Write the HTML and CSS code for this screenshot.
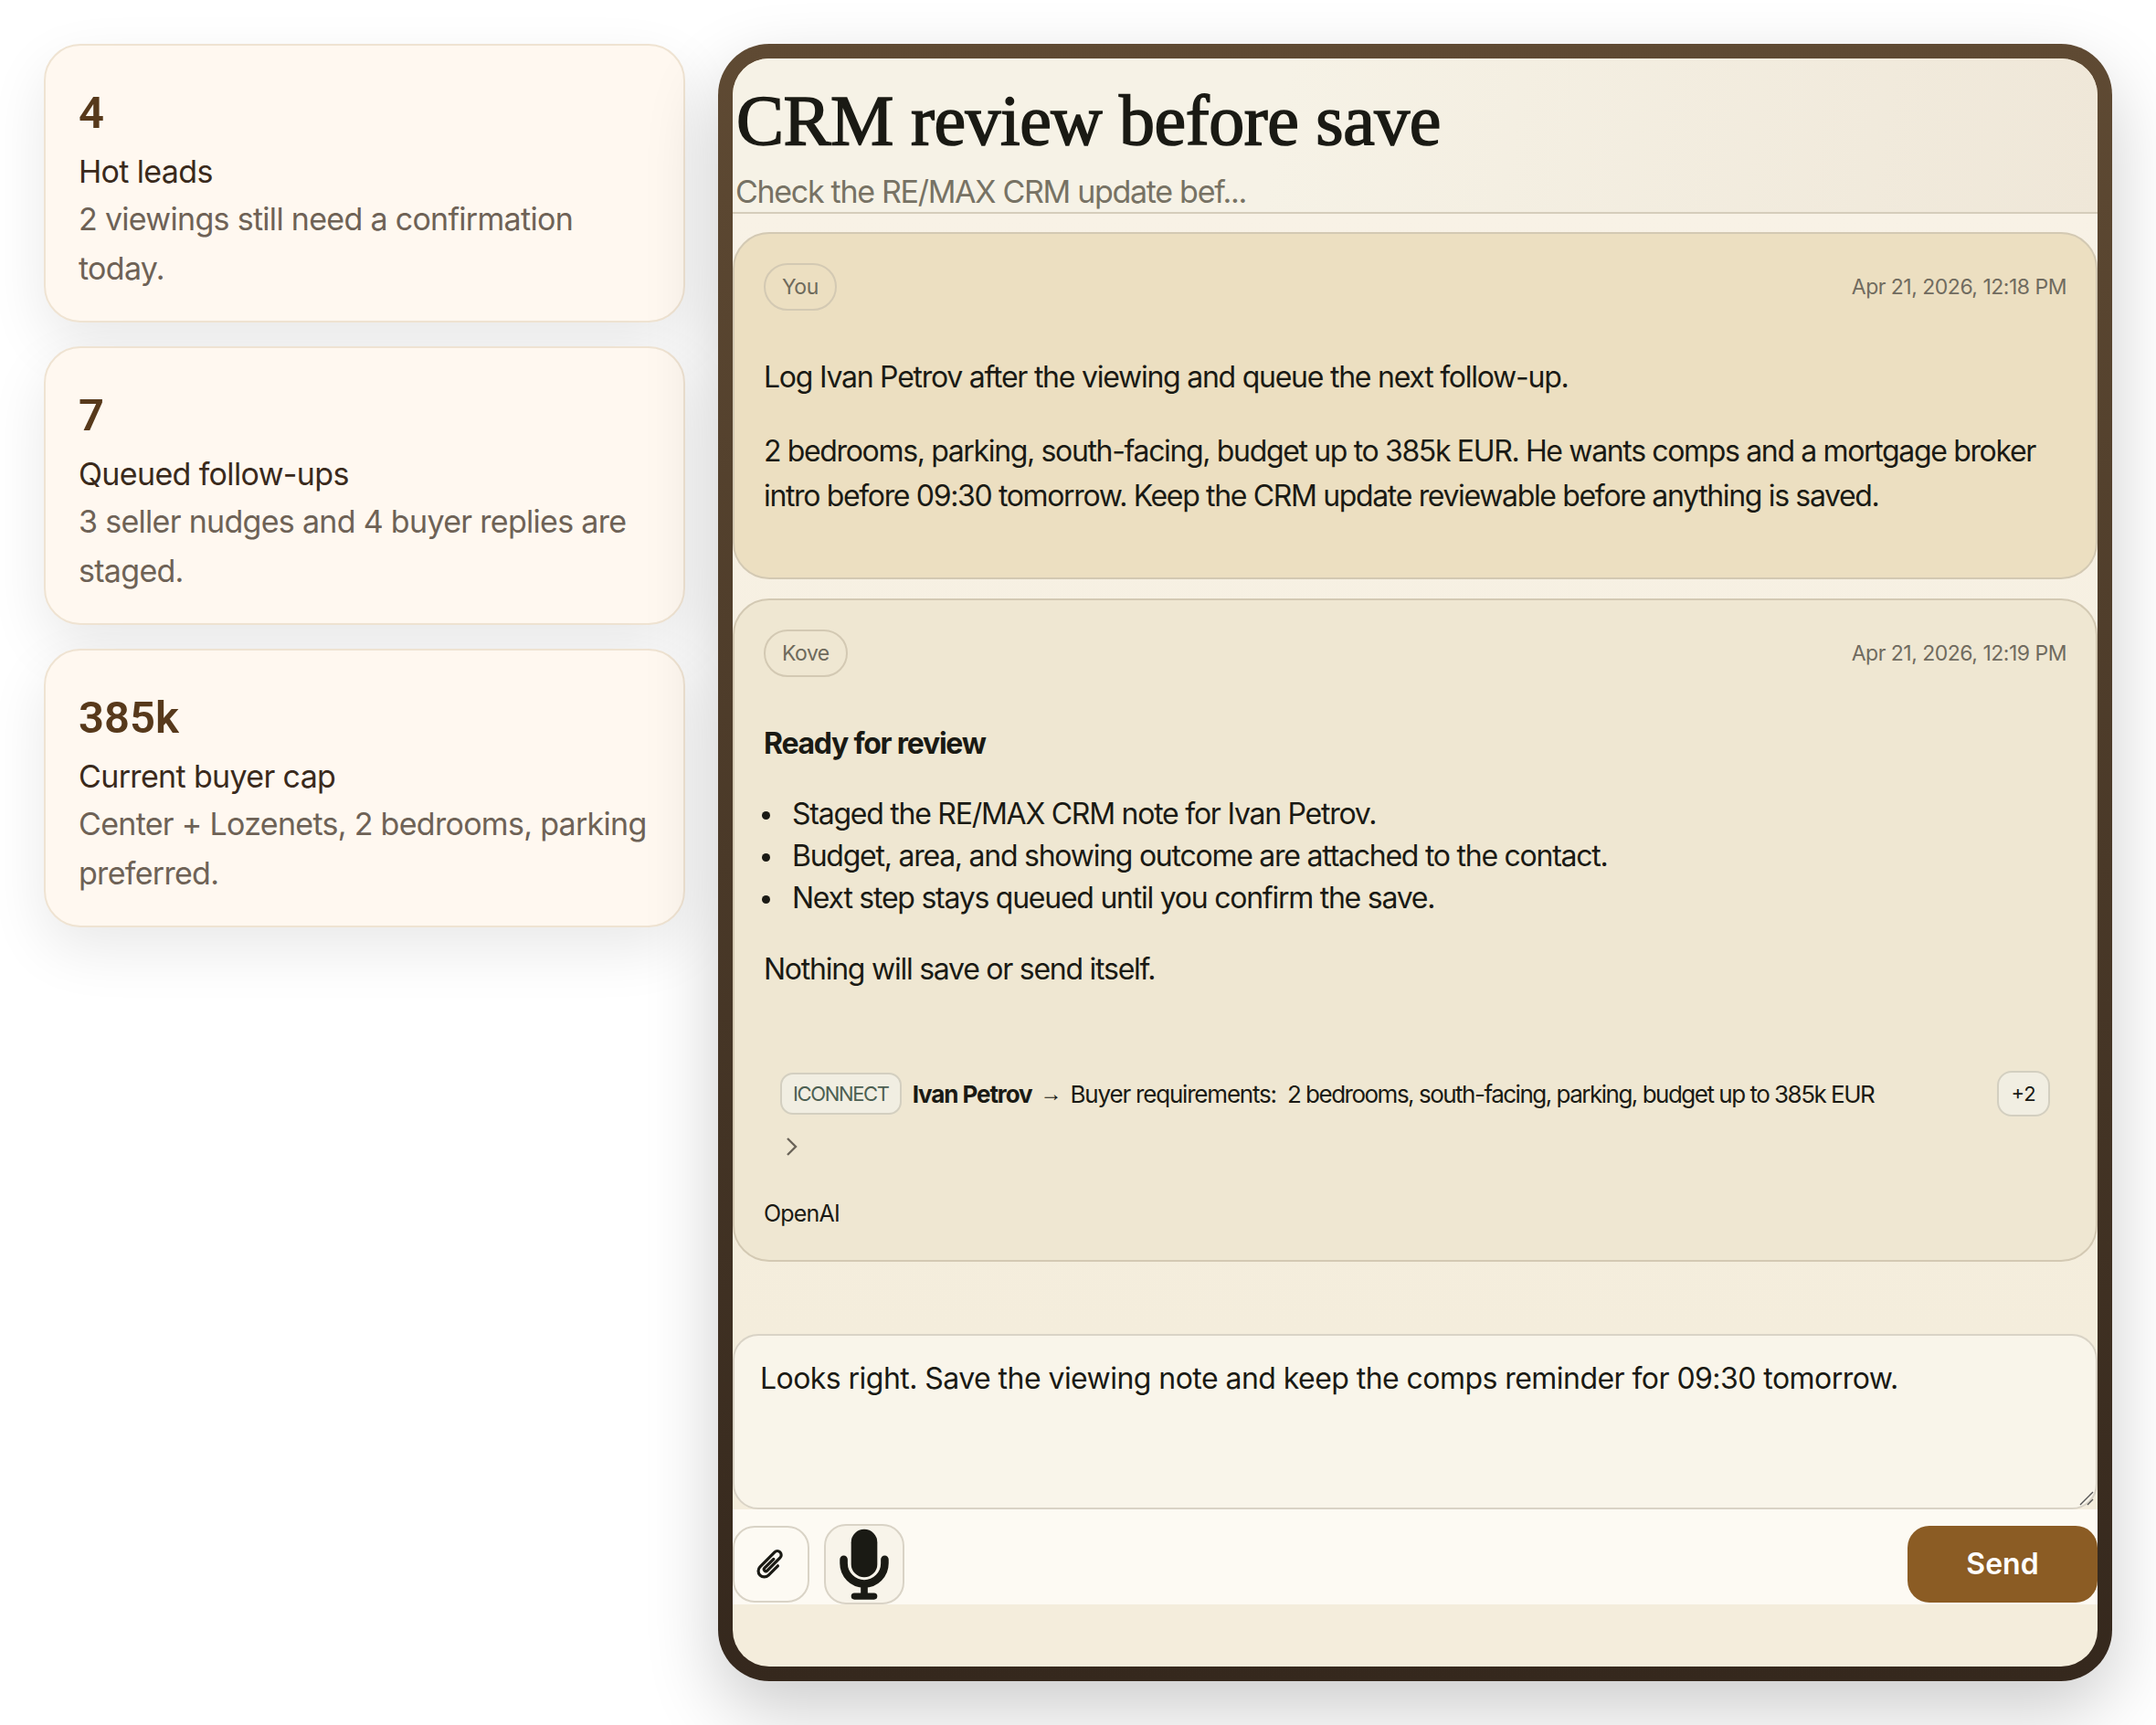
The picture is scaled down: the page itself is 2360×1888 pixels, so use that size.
FILE: index.html
```html
<!DOCTYPE html>
<html lang="en">
<head>
<meta charset="utf-8">
<title>CRM review before save</title>
<link rel="stylesheet" href="styles.css">
</head>
<body>
<main class="page">
  <aside class="stats">
    <section class="card">
      <div class="num">4</div>
      <div class="label">Hot leads</div>
      <p class="desc">2 viewings still need a confirmation today.</p>
    </section>
    <section class="card">
      <div class="num">7</div>
      <div class="label">Queued follow-ups</div>
      <p class="desc">3 seller nudges and 4 buyer replies are staged.</p>
    </section>
    <section class="card">
      <div class="num">385k</div>
      <div class="label">Current buyer cap</div>
      <p class="desc">Center + Lozenets, 2 bedrooms, parking preferred.</p>
    </section>
  </aside>
  <section class="shell">
    <div class="inner">
      <header class="head">
        <h1 class="title">CRM review before save</h1>
        <div class="sub">Check the RE/MAX CRM update bef...</div>
      </header>
      <div class="thread">
        <article class="msg msg-user">
          <div class="meta"><span class="who">You</span><time class="time">Apr 21, 2026, 12:18 PM</time></div>
          <div class="body">
            <p>Log Ivan Petrov after the viewing and queue the next follow-up.</p>
            <p class="tight">2 bedrooms, parking, south-facing, budget up to 385k EUR. He wants comps and a mortgage broker intro before 09:30 tomorrow. Keep the CRM update reviewable before anything is saved.</p>
          </div>
        </article>
        <article class="msg msg-bot">
          <div class="meta"><span class="who">Kove</span><time class="time">Apr 21, 2026, 12:19 PM</time></div>
          <div class="body">
            <p class="strong">Ready for review</p>
            <ul class="list">
              <li>Staged the RE/MAX CRM note for Ivan Petrov.</li>
              <li>Budget, area, and showing outcome are attached to the contact.</li>
              <li>Next step stays queued until you confirm the save.</li>
            </ul>
            <p>Nothing will save or send itself.</p>
          </div>
          <div class="action">
            <div class="action-row">
              <span class="tag">ICONNECT</span>
              <b class="person">Ivan Petrov</b>
              <span class="arrow">→</span>
              <span class="field">Buyer requirements:</span>
              <span class="value">2 bedrooms, south-facing, parking, budget up to 385k EUR</span>
              <span class="more">+2</span>
            </div>
            <svg class="chev" viewBox="0 0 16 24" aria-hidden="true"><path d="M3 3l9 9-9 9" fill="none" stroke="#6b6459" stroke-width="2.4"/></svg>
          </div>
          <div class="model">OpenAI</div>
        </article>
      </div>
      <form class="composer">
        <div class="input">Looks right. Save the viewing note and keep the comps reminder for 09:30 tomorrow.<svg class="grip" viewBox="0 0 16 16" aria-hidden="true"><path d="M15 1L1 15M15 9l-6 6" stroke="#555" stroke-width="1.4" fill="none"/></svg></div>
        <div class="tools">
          <button type="button" class="tool clip"><svg viewBox="-20 -20 40 40" width="40" height="40" aria-hidden="true"><path transform="rotate(45)" d="M6.500 -4V10.500A6.500 6.500 0 0 1 -6.500 10.500V-12A4.250 4.250 0 0 1 2 -12V8A2 2 0 0 1 -2 8V-6" fill="none" stroke="#1a1a14" stroke-width="3.200" stroke-linecap="round"/></svg></button>
          <button type="button" class="tool mic"><svg viewBox="0 0 88 88" width="88" height="88" aria-hidden="true"><rect x="29" y="4" width="30" height="55" rx="15" fill="#1a1a14"/><path d="M20.5 38.5V43a23.5 23.5 0 0 0 47 0v-4.5" fill="none" stroke="#1a1a14" stroke-width="9" stroke-linecap="round"/><rect x="40" y="68" width="8" height="12" fill="#1a1a14"/><rect x="29" y="77" width="30" height="7.500" rx="3.750" fill="#1a1a14"/></svg></button>
          <button type="button" class="send">Send</button>
        </div>
      </form>
    </div>
  </section>
</main>
</body>
</html>
```
FILE: styles.css
```css
* { box-sizing: border-box; }
html, body { margin: 0; height: 100%; background: #fff; }
body { font-family: Inter, "Noto Sans", sans-serif; color: #1a1a14; overflow: hidden; }
.page { display: flex; gap: 36px; align-items: flex-start; padding: 48px; }
.stats { width: 702px; flex: none; display: flex; flex-direction: column; gap: 26px; }
.card {
  background: #fff8f0; border: 2px solid #efe3d2; border-radius: 40px;
  padding: 46px 36px 31px;
  box-shadow: 0 24px 64px rgba(0,0,0,.09);
}
.num { font-family: Roboto, sans-serif; font-weight: 600; font-size: 49px; line-height: 56px; color: #57391b; }
.label { font-size: 34px; line-height: 50px; letter-spacing: -.65px; color: #3a2a1c; margin-top: 11px; }
.desc { margin: 0; font-size: 34px; line-height: 53.500px; letter-spacing: -.7px; color: #6e6256; }
.shell {
  width: 1526px; height: 1792px; flex: none; padding: 16px; border-radius: 56px;
  background: linear-gradient(180deg, #5f4a33, #35281d);
  box-shadow: 0 32px 80px rgba(0,0,0,.2);
}
.inner { height: 100%; border-radius: 40px; overflow: hidden; display: flex; flex-direction: column; background: #f4eddc; }
.head { height: 170px; flex: none; border-bottom: 2px solid #d5cdbb; background: linear-gradient(100deg, #f6f2e6 40%, #efe7d8); padding-top: 26px; }
.title { margin: 0 0 0 4px; font-family: "Liberation Serif", serif; font-weight: 400; -webkit-text-stroke: 1.600px #1a1a14; font-size: 78px; line-height: 84px; color: #1a1a14; letter-spacing: -.5px; }
.sub { margin-left: 3px; margin-top: 11px; font-size: 34px; line-height: 50px; letter-spacing: -1.300px; color: #777264; }
.thread { flex: none; padding-top: 20px; display: flex; flex-direction: column; gap: 21px; height: 1226px; background: linear-gradient(180deg, #f8f2e6, #f4eddc); }
.msg { border: 2px solid #d3c9b3; border-radius: 40px; padding: 32px; }
.msg-user { background: #ecdfc1; height: 380px; }
.msg-bot { background: #efe7d2; height: 726px; }
.meta { display: flex; justify-content: space-between; align-items: center; }
.who { height: 52px; padding: 0 18px; border: 2px solid #d3c9b3; border-radius: 26px; font-size: 23px; letter-spacing: -.5px; line-height: 48px; color: #6e6a5c; }
.time { font-size: 23px; letter-spacing: -.5px; color: #706b5f; }
.body { font-size: 32px; line-height: 49px; letter-spacing: -1.250px; margin-top: 48px; }
.body p { margin: 0 0 32px; }
.body p.tight { letter-spacing: -1.350px; }
.body p.strong { margin-bottom: 30px; font-weight: 700; }
.list { margin: 0 0 30px; padding: 0 0 0 31px; line-height: 46px; list-style: none; }
.list li { position: relative; }
.list li::before { content: ""; position: absolute; left: -33px; top: 20px; width: 9px; height: 9px; border-radius: 50%; background: #1a1a14; }
.action { margin: 87px 18px 0; }
.action-row { display: flex; align-items: center; gap: 12px; font-size: 26px; letter-spacing: -1.200px; }
.tag { height: 46px; padding: 0 12px; border: 2px solid #d3cfc0; border-radius: 14px; background: #f1eee2; font-size: 22px; letter-spacing: -1.350px; line-height: 42px; color: #4c5f52; }
.person { font-weight: 700; letter-spacing: -1.100px; }
.arrow { font-family: "Liberation Sans", sans-serif; font-size: 24px; letter-spacing: 0; margin: 0 -3px; }
.value { flex: 1; letter-spacing: -1.500px; }
.more { height: 50px; width: 58px; border: 2px solid #d3cfc0; border-radius: 16px; background: #f1eee2; text-align: center; font-size: 22px; letter-spacing: 0; line-height: 46px; }
.chev { display: block; width: 16px; height: 24px; margin: 21px 5px 0; }
.model { font-size: 25px; letter-spacing: -.8px; margin-top: 46px; }
.composer { flex: none; display: flex; flex-direction: column; height: 296px; }
.input { height: 192px; padding: 22px 28px; position: relative; background: #f9f5ea; border: 2px solid #d9d3c6; border-radius: 28px; font-size: 32px; line-height: 50px; letter-spacing: -.55px; }
.grip { position: absolute; right: 2px; bottom: 2px; width: 16px; height: 16px; }
.tools { height: 104px; flex: none; display: flex; align-items: flex-start; background: #fdfaf3; gap: 16px; padding-top: 18px; }
.tool { padding: 0; display: flex; align-items: center; justify-content: center; border: 2px solid #d9d3c6; border-radius: 24px; background: #fdfaf3; }
.clip { width: 84px; height: 84px; }
.mic { width: 88px; height: 88px; margin-top: -2px; background: #f8f4ea; }
.send { margin-left: auto; width: 208px; height: 84px; border: 0; border-radius: 24px; background: #8b5c24; color: #fff; font: 600 32px/80px Inter, sans-serif; }
```
